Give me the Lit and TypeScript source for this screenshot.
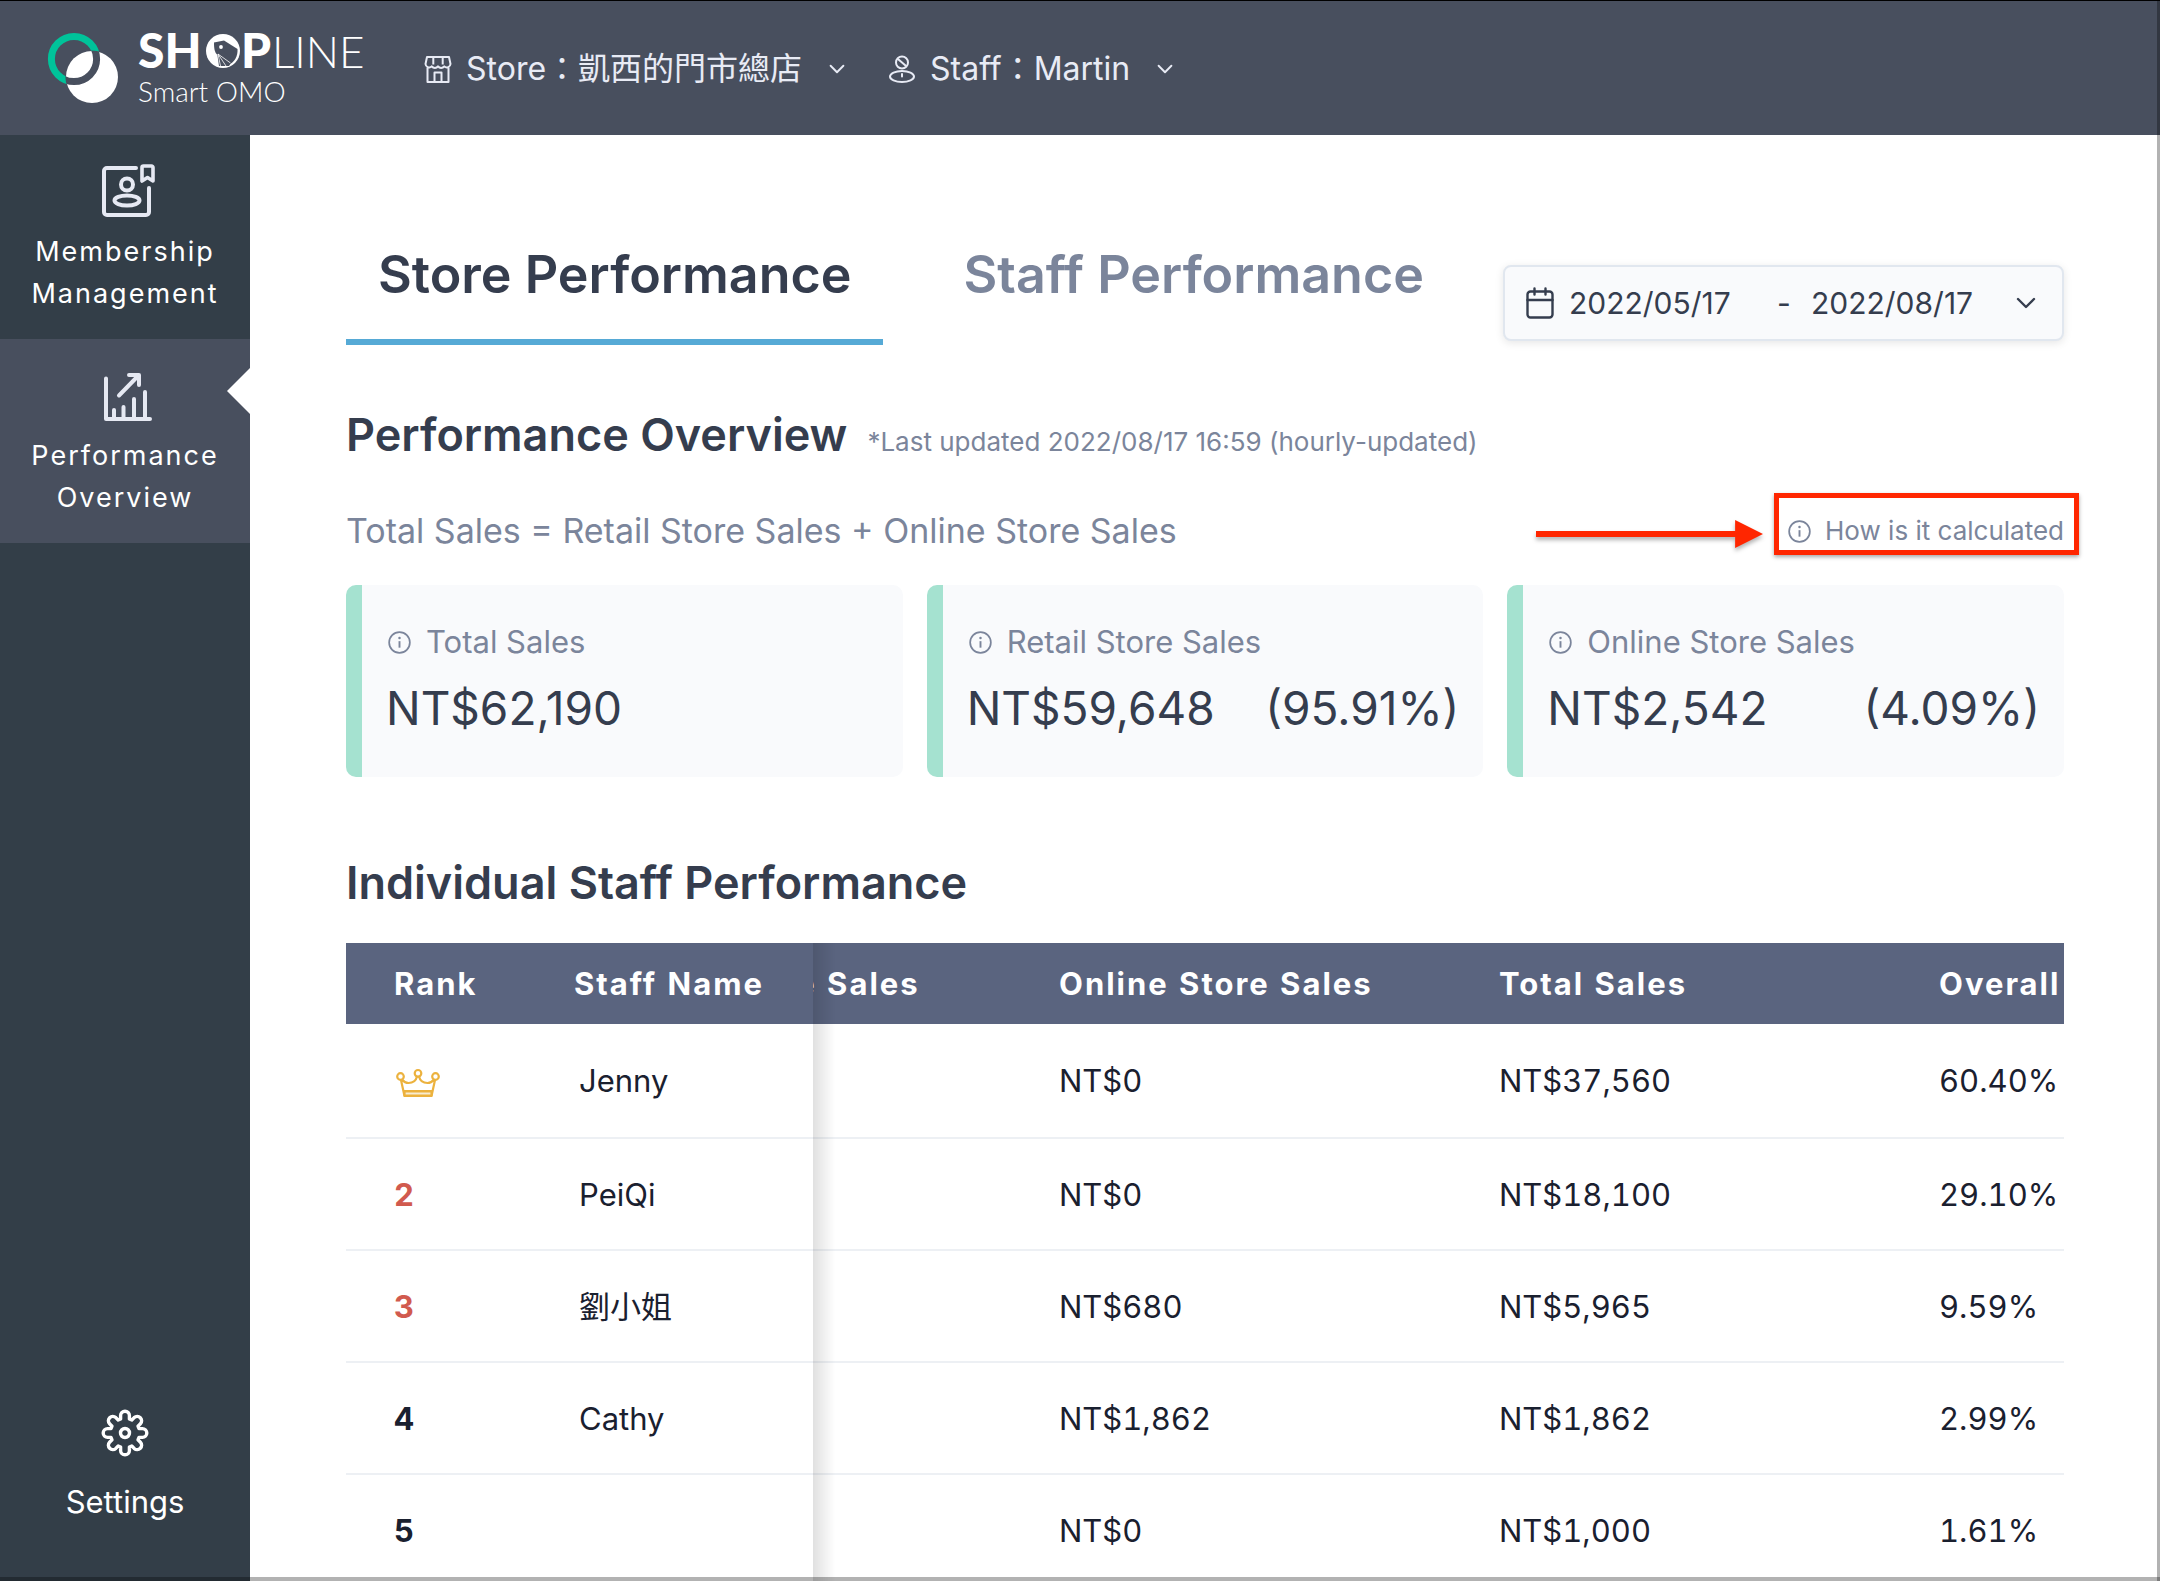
import { LitElement, html, css, svg, nothing } from "lit";
import { customElement, query } from "lit/decorators.js";

interface StaffRow {
  rank: number;
  name: string;
  online: string;
  total: string;
  share: string;
}

const ROWS: StaffRow[] = [
  { rank: 1, name: "Jenny", online: "NT$0", total: "NT$37,560", share: "60.40%" },
  { rank: 2, name: "PeiQi", online: "NT$0", total: "NT$18,100", share: "29.10%" },
  { rank: 3, name: "劉小姐", online: "NT$680", total: "NT$5,965", share: "9.59%" },
  { rank: 4, name: "Cathy", online: "NT$1,862", total: "NT$1,862", share: "2.99%" },
  { rank: 5, name: "", online: "NT$0", total: "NT$1,000", share: "1.61%" },
];

const CARDS = [
  { label: "Total Sales", value: "NT$62,190", share: "" },
  { label: "Retail Store Sales", value: "NT$59,648", share: "(95.91%)" },
  { label: "Online Store Sales", value: "NT$2,542", share: "(4.09%)" },
];

/** Outline of a cog with eight rounded teeth, centred on the origin. */
function cogPath(): string {
  const parts: string[] = [];
  const at = (x: number, y: number, turn: number) => {
    const c = Math.cos(turn);
    const s = Math.sin(turn);
    return `${(x * c - y * s).toFixed(2)} ${(x * s + y * c).toFixed(2)}`;
  };
  for (let i = 0; i < 8; i++) {
    const turn = (i * Math.PI) / 4;
    parts.push(`${i ? "L" : "M"}${at(-4.4, -14, turn)}`);
    parts.push(`L${at(-4.4, -17.4, turn)}`);
    parts.push(`A4.4 4.4 0 0 1 ${at(4.4, -17.4, turn)}`);
    parts.push(`L${at(4.4, -14, turn)}`);
  }
  return parts.join("") + "Z";
}

const infoIcon = html`<svg class="icon-info" viewBox="0 0 24 24" aria-hidden="true">
  <circle cx="12" cy="12" r="10.8" fill="none" stroke="currentColor" stroke-width="1.8" />
  <path d="M12 10.6V17.4" stroke="currentColor" stroke-width="2" />
  <circle cx="12" cy="7.4" r="1.3" fill="currentColor" />
</svg>`;

const chevron = html`<svg class="icon-chevron" viewBox="0 0 20 12" aria-hidden="true">
  <path d="M2 2l8 8 8-8" fill="none" stroke="currentColor" stroke-width="2.4" stroke-linecap="round" stroke-linejoin="round" />
</svg>`;

const ring = svg`<circle cx="41" cy="26" r="22.6" />`;

const logo = html`<svg class="logo" viewBox="0 -4 340 80" role="img" aria-label="SHOPLINE Smart OMO">
  <defs>
    <clipPath id="disc"><circle cx="59" cy="44" r="26.6" /></clipPath>
  </defs>
  <g transform="translate(-15 0)">
    <g fill="none" stroke="#00c39a" stroke-width="7">${ring}</g>
    <circle cx="59" cy="44" r="26" fill="#fff" />
    <g clip-path="url(#disc)" fill="none" stroke="#484f5e" stroke-width="7">${ring}</g>
  </g>
  <g fill="#fff" font-family="Lato, sans-serif">
    <text x="90" y="35" font-size="48" font-weight="900">SH</text>
    <text x="193" y="35" font-size="48" font-weight="900">P</text>
    <text x="224" y="35" font-size="44" font-weight="300">LINE</text>
    <text x="90" y="69" font-size="28" font-weight="300">Smart OMO</text>
  </g>
  <circle cx="175" cy="18" r="17" fill="#fff" />
  <path d="M166 9.5l10-2 13.5 8.5c.6 7-3 13.5-9.5 16L170 20z" fill="#484f5e" />
  <path d="M166 9.5c0 6 .6 9.5 3.4 12.5l1.6 11h10l4-6z" fill="#484f5e" />
  <circle cx="173" cy="14" r="1.9" fill="#fff" />
  <path d="M170 21l2.5 12M170 21l8 12M170 21l12.5 9" stroke="#fff" stroke-width=".8" fill="none" />
</svg>`;

@customElement("app-root")
export class AppRoot extends LitElement {
  @query(".table-scroll") private scroller!: HTMLElement;

  static styles = css`
    :host {
      --ink: #353d4e;
      --muted: #7b859b;
      --bar: #484f5e;
      --rail: #333e48;
      display: flex;
      flex-direction: column;
      height: 100vh;
      overflow: hidden;
      position: relative;
      background: #fff;
      color: var(--ink);
      font-family: Inter, "Noto Sans CJK TC", sans-serif;
      font-size: 30px;
    }
    * {
      box-sizing: border-box;
    }
    button,
    input,
    select {
      margin: 0;
      padding: 0;
      border: 0;
      background: none;
      color: inherit;
      font: inherit;
      appearance: none;
    }
    a {
      color: inherit;
      text-decoration: none;
    }
    h2,
    p {
      margin: 0;
    }
    svg {
      display: block;
      flex: none;
    }

    .topbar {
      display: flex;
      align-items: center;
      flex: none;
      height: 135px;
      padding: 2px 0 0 48px;
      border-top: 1px solid #000;
      background: var(--bar);
      color: #e8ebf5;
    }
    .logo {
      width: 340px;
      height: 80px;
      margin-right: 36px;
      overflow: visible;
    }
    .picker {
      display: flex;
      align-items: center;
      margin-right: 43px;
      line-height: 48px;
    }
    .picker > svg:first-child {
      width: 28px;
      height: 28px;
      margin-right: 14px;
    }
    .picker select {
      margin-right: 26px;
      font-size: 32px;
    }
    .picker-label {
      font-size: 32px;
    }
    .picker .icon-chevron {
      width: 16px;
      height: 10px;
    }

    .body {
      display: flex;
      flex: 1;
      min-height: 0;
    }
    .rail {
      display: flex;
      flex-direction: column;
      flex: none;
      width: 250px;
      background: var(--rail);
      color: #fff;
    }
    .rail-item {
      position: relative;
      display: flex;
      flex-direction: column;
      align-items: center;
      height: 204px;
      padding-top: 28px;
      font-size: 27px;
      line-height: 42px;
      letter-spacing: 2px;
      text-align: center;
    }
    .rail-item svg {
      width: 56px;
      height: 56px;
      margin-bottom: 12px;
      color: #e6e9f3;
    }
    .rail-item.active {
      background: var(--bar);
    }
    .rail-item.active::after {
      content: "";
      position: absolute;
      top: 29px;
      right: 0;
      border: 23px solid transparent;
      border-left: 0;
      border-right-color: #fff;
    }
    .rail-settings {
      display: flex;
      flex-direction: column;
      align-items: center;
      gap: 21px;
      margin-top: auto;
      padding-bottom: 57px;
      font-size: 31px;
      line-height: 44px;
    }
    .rail-settings svg {
      width: 52px;
      height: 52px;
    }

    main {
      flex: 1;
      min-width: 0;
      overflow: hidden;
      padding: 84px 96px 0;
    }
    .tab-row {
      display: flex;
      align-items: flex-end;
      justify-content: space-between;
    }
    .tabs {
      display: flex;
      gap: 48px;
    }
    .tab {
      padding: 24px 32px 32px;
      border-bottom: 6px solid transparent;
      color: var(--muted);
      font-size: 52px;
      font-weight: 600;
      line-height: 64px;
    }
    .tab.active {
      border-color: #56aad6;
      color: var(--ink);
    }
    .range {
      display: flex;
      align-items: center;
      width: 561px;
      height: 76px;
      margin-bottom: 4px;
      padding: 0 26px 0 21px;
      border: 2px solid #e1e7ef;
      border-radius: 8px;
      background: #f9fafc;
      box-shadow: 0 2px 8px rgba(0, 0, 0, 0.1);
      font-size: 30px;
    }
    .range input {
      width: 180px;
    }
    .range label {
      display: flex;
      align-items: center;
    }
    .icon-calendar {
      width: 28px;
      height: 32px;
      margin-right: 15px;
    }
    .dash {
      width: 12px;
      margin: 0 22px 0 28px;
    }
    .range button {
      margin-left: auto;
    }
    .range .icon-chevron {
      width: 20px;
      height: 12px;
    }

    .title-row {
      display: flex;
      align-items: baseline;
      gap: 20px;
      margin-top: 62px;
    }
    h2 {
      font-size: 45px;
      font-weight: 600;
      line-height: 56px;
    }
    .updated {
      color: var(--muted);
      font-size: 26px;
    }
    .formula-row {
      display: flex;
      align-items: center;
      justify-content: space-between;
      margin-top: 44px;
      color: var(--muted);
      font-size: 34px;
      line-height: 48px;
    }
    .how {
      position: relative;
      display: flex;
      align-items: center;
      gap: 14px;
      font-size: 26px;
      line-height: 48px;
    }
    .icon-info {
      width: 23px;
      height: 23px;
    }
    .callout {
      position: absolute;
      inset: -14px -15px 0 -14px;
      border: 5px solid #ff2600;
      box-shadow: 0 2px 4px rgba(0, 0, 0, 0.35);
      pointer-events: none;
    }
    .callout-arrow {
      position: absolute;
      top: 12px;
      right: calc(100% + 25px);
      width: 227px;
      height: 30px;
      filter: drop-shadow(0 3px 2px rgba(0, 0, 0, 0.3));
    }

    .cards {
      display: grid;
      grid-template-columns: repeat(3, 1fr);
      gap: 24px;
      margin-top: 30px;
    }
    .card {
      height: 192px;
      padding: 37px 24px 0;
      border-left: 16px solid #a5e2d0;
      border-radius: 10px;
      background: #f9fafc;
    }
    .card-label {
      display: flex;
      align-items: center;
      gap: 15px;
      padding-left: 2px;
      color: var(--muted);
      font-size: 31px;
      line-height: 40px;
    }
    .card-value {
      display: flex;
      justify-content: space-between;
      margin-top: 18px;
      font-size: 46px;
      line-height: 56px;
    }

    .staff-title {
      margin-top: 78px;
    }
    .table-scroll {
      margin-top: 32px;
      overflow-x: auto;
      overflow-y: hidden;
      scrollbar-width: none;
    }
    table {
      width: 2227px;
      table-layout: fixed;
      border-collapse: separate;
      border-spacing: 0;
      color: #1a202f;
      font-size: 31px;
      font-variant-numeric: tabular-nums;
      line-height: 40px;
    }
    .col-rank {
      width: 180px;
    }
    .col-name {
      width: 287px;
    }
    th,
    td {
      padding: 1px 0 0 48px;
      text-align: left;
      white-space: nowrap;
    }
    tbody th,
    tbody td {
      height: 112px;
      border-bottom: 2px solid #edf0f4;
      font-weight: 400;
    }
    tbody tr:first-child > * {
      height: 115px;
    }
    .rank,
    .name {
      position: sticky;
      z-index: 1;
      background: #fff;
    }
    .rank {
      left: 0;
    }
    .name {
      left: 180px;
    }
    tbody .rank {
      font-weight: 700;
    }
    tbody .name {
      padding-left: 53px;
    }
    thead th,
    thead .rank,
    thead .name {
      height: 81px;
      background: #5a647f;
      color: #fff;
      font-weight: 700;
      letter-spacing: 2px;
    }
    .name::after {
      content: "";
      position: absolute;
      top: 0;
      bottom: -2px;
      left: 100%;
      width: 22px;
      background: linear-gradient(90deg, rgba(0, 0, 0, 0.12), transparent);
    }
    thead .name::after {
      bottom: 0;
    }
    tbody .top {
      color: #d15a4e;
    }
    .icon-crown {
      width: 44px;
      height: 32px;
      margin-left: 2px;
    }

    .edge-right,
    .edge-bottom {
      position: absolute;
      right: 0;
      bottom: 0;
      z-index: 2;
      background: rgba(0, 0, 0, 0.3);
    }
    .edge-right {
      top: 0;
      width: 3px;
    }
    .edge-bottom {
      left: 0;
      height: 4px;
    }
  `;

  firstUpdated() {
    // Bring the online and total columns into view beside the frozen pair.
    this.scroller.scrollLeft = 242;
  }

  private renderTopbar() {
    return html`<header class="topbar">
      ${logo}
      <div class="picker">
        <svg viewBox="0 0 28 28" aria-hidden="true" fill="none" stroke="currentColor" stroke-width="2" stroke-linejoin="round">
          <path d="M3 2h22l1.5 7a3.7 3.7 0 0 1-6.25 2.4 4 4 0 0 1-6.25 0 4 4 0 0 1-6.25 0A3.7 3.7 0 0 1 1.5 9zM9.3 2v7.5M18.7 2v7.5M3.5 12.5V27h21V12.5M10.5 27v-9.5h7V27" />
        </svg>
        <label class="picker-label" for="store">Store：</label>
        <select id="store"><option>凱西的門市總店</option></select>
        ${chevron}
      </div>
      <div class="picker">
        <svg viewBox="0 0 28 28" aria-hidden="true" fill="none" stroke="currentColor" stroke-width="2" stroke-linecap="round">
          <circle cx="14" cy="7.5" r="6" />
          <path d="M10.5 4.5l7 6" />
          <ellipse cx="14" cy="21.5" rx="12" ry="5.5" />
          <path d="M14 19v2.5" />
        </svg>
        <label class="picker-label" for="staff">Staff：</label>
        <select id="staff"><option>Martin</option></select>
        ${chevron}
      </div>
    </header>`;
  }

  private renderRail() {
    return html`<nav class="rail">
      <a class="rail-item" href="#membership">
        <svg viewBox="-3 0 56 56" overflow="visible" aria-hidden="true" fill="none" stroke="currentColor" stroke-width="4" stroke-linecap="round" stroke-linejoin="round">
          <path d="M36 5H7a3 3 0 0 0-3 3v41a3 3 0 0 0 3 3h39a3 3 0 0 0 3-3V25" />
          <circle cx="27" cy="21.5" r="6" />
          <ellipse cx="27" cy="37.5" rx="12.5" ry="5" />
          <path d="M43.5 3h8a1.5 1.5 0 0 1 1.5 1.5V18l-5.5-3.5L42 18V4.5A1.5 1.5 0 0 1 43.5 3z" stroke-width="3.6" />
        </svg>
        Membership<br />Management
      </a>
      <a class="rail-item active" href="#performance" aria-current="page">
        <svg viewBox="-3 -2 56 56" aria-hidden="true" fill="none" stroke="currentColor" stroke-width="4" stroke-linecap="round" stroke-linejoin="round">
          <path d="M6 9.5V50h44M14 50v-9M23.5 50V38M34 50V30M45 50V23M19 26.5L38 7M29 6h10v10" />
        </svg>
        Performance<br />Overview
      </a>
      <a class="rail-settings" href="#settings">
        <svg viewBox="-26 -26 52 52" aria-hidden="true" fill="none" stroke="currentColor" stroke-width="3.4" stroke-linejoin="round">
          <path d=${cogPath()} />
          <circle r="4.5" />
        </svg>
        Settings
      </a>
    </nav>`;
  }

  private renderRank(rank: number) {
    if (rank > 1) return rank;
    return html`<svg class="icon-crown" viewBox="0 -4 44 32" role="img" aria-label="1" fill="none" stroke="#ecb23e" stroke-width="2.2" stroke-linejoin="round">
      <circle cx="4.5" cy="7.5" r="3.3" />
      <circle cx="22" cy="4.3" r="3.3" />
      <circle cx="39.5" cy="7.5" r="3.3" />
      <path d="M5 11l3.5 16h27L39 11M6 10.5c2 2.5 4 3.5 6.5 3.5 4.5 0 7.5-2.5 8.5-6.5M38 10.5c-2 2.5-4 3.5-6.5 3.5-4.5 0-7.5-2.5-8.5-6.5M8 22h28" />
      <path d="M8.5 22.5h27v4h-27z" fill="#f8ecd0" />
    </svg>`;
  }

  render() {
    return html`
      ${this.renderTopbar()}
      <div class="body">
        ${this.renderRail()}
        <main>
          <div class="tab-row">
            <div class="tabs" role="tablist">
              <button class="tab active" role="tab" aria-selected="true">Store Performance</button>
              <button class="tab" role="tab" aria-selected="false">Staff Performance</button>
            </div>
            <div class="range">
              <label for="from">
                <svg class="icon-calendar" viewBox="0 0 28 32" role="img" aria-label="Start date" fill="none" stroke="currentColor" stroke-width="2.4" stroke-linecap="round">
                  <rect x="1.5" y="4.5" width="25" height="26" rx="3" />
                  <path d="M1.5 13h25M8.5 1.5v6M19.5 1.5v6" />
                </svg>
              </label>
              <input id="from" type="text" value="2022/05/17" />
              <label class="dash" for="to">-</label>
              <input id="to" type="text" value="2022/08/17" />
              <button aria-label="Choose dates">${chevron}</button>
            </div>
          </div>

          <div class="title-row">
            <h2>Performance Overview</h2>
            <p class="updated">*Last updated 2022/08/17 16:59 (hourly-updated)</p>
          </div>
          <div class="formula-row">
            <p>Total Sales = Retail Store Sales + Online Store Sales</p>
            <button class="how">
              ${infoIcon} How is it calculated
              <span class="callout"></span>
              <svg class="callout-arrow" viewBox="0 0 228 30" aria-hidden="true" fill="#ff2600">
                <path d="M0 12h200V1l28 14-28 14V18H0z" />
              </svg>
            </button>
          </div>

          <section class="cards">
            ${CARDS.map(
              (c) => html`<article class="card">
                <div class="card-label">${infoIcon}<span>${c.label}</span></div>
                <div class="card-value">
                  <span>${c.value}</span>${c.share ? html`<span>${c.share}</span>` : nothing}
                </div>
              </article>`
            )}
          </section>

          <h2 class="staff-title">Individual Staff Performance</h2>
          <div class="table-scroll">
            <table>
              <colgroup>
                <col class="col-rank" />
                <col class="col-name" />
                <col span="4" />
              </colgroup>
              <thead>
                <tr>
                  <th class="rank" scope="col">Rank</th>
                  <th class="name" scope="col">Staff Name</th>
                  <th scope="col">Retail Store Sales</th>
                  <th scope="col">Online Store Sales</th>
                  <th scope="col">Total Sales</th>
                  <th scope="col">Overall</th>
                </tr>
              </thead>
              <tbody>
                ${ROWS.map(
                  (r) => html`<tr>
                    <td class="rank ${r.rank < 4 ? "top" : ""}">${this.renderRank(r.rank)}</td>
                    <th class="name" scope="row">${r.name}</th>
                    <td></td>
                    <td>${r.online}</td>
                    <td>${r.total}</td>
                    <td>${r.share}</td>
                  </tr>`
                )}
              </tbody>
            </table>
          </div>
        </main>
      </div>
      <div class="edge-right"></div>
      <div class="edge-bottom"></div>
    `;
  }
}
